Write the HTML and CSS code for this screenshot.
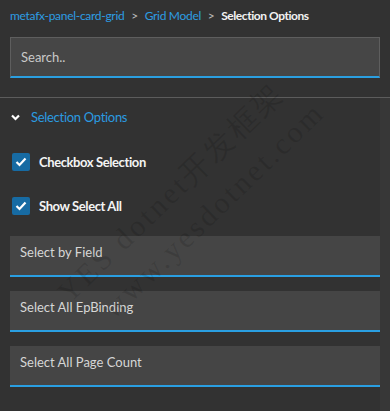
FILE: index.html
```html
<!DOCTYPE html>
<html lang="en">
<head>
    <meta charset="UTF-8" />
    <meta name="viewport" content="width=device-width, initial-scale=1" />
    <title>Selection Options</title>
    <link rel="stylesheet" href="styles.css">
</head>
<body>
    <nav class="breadcrumb">
        <a href="#">metafx-panel-card-grid</a>
        <span class="sep">&gt;</span>
        <a href="#">Grid Model</a>
        <span class="sep">&gt;</span>
        <span class="current">Selection Options</span>
    </nav>

    <div class="search">
        <input type="text" placeholder="Search.." />
    </div>

    <div class="panel">
        <div class="panel-body">
            <div class="section-header">
                <svg class="chevron" width="9" height="7" viewBox="0 0 9 7">
                    <polyline points="1,1.5 4.5,5 8,1.5" fill="none" stroke="#fff" stroke-width="2.2" />
                </svg>
                <span>Selection Options</span>
            </div>

            <label class="check-row">
                <span class="checkbox">
                    <svg width="12" height="10" viewBox="0 0 12 10">
                        <polyline points="1.5,5 4.5,8 10.5,1.5" fill="none" stroke="#fff" stroke-width="2.2" />
                    </svg>
                </span>
                Checkbox Selection
            </label>

            <label class="check-row">
                <span class="checkbox">
                    <svg width="12" height="10" viewBox="0 0 12 10">
                        <polyline points="1.5,5 4.5,8 10.5,1.5" fill="none" stroke="#fff" stroke-width="2.2" />
                    </svg>
                </span>
                Show Select All
            </label>

            <div class="fields">
                <div class="field">Select by Field</div>
                <div class="field">Select All EpBinding</div>
                <div class="field">Select All Page Count</div>
            </div>
        </div>
        <div class="scroll-track"></div>
    </div>

    <div class="watermark">YES dotnet开发框架
  www.yesdotnet.com</div>
</body>
</html>
```

FILE: styles.css
```css
body {
    margin: 0;
    background: #323232;
    font-family: Lato, "Noto Sans", sans-serif;
    font-size: 13px;
    color: #fff;
    height: 411px;
    overflow: hidden;
    position: relative;
}

.breadcrumb {
    padding: 8px 10px 13px;
    line-height: 16px;
    font-size: 12px;
    letter-spacing: -0.3px;
    white-space: nowrap;
}

.breadcrumb a {
    color: #2d9de2;
    text-decoration: none;
}

.breadcrumb .sep {
    color: #bdbdbd;
    margin: 0 4px;
}

.breadcrumb .current {
    color: #f2f2f2;
    font-weight: 700;
    letter-spacing: -0.45px;
}

.search {
    padding: 0 10px;
}

.search input {
    display: block;
    width: 100%;
    height: 41px;
    box-sizing: border-box;
    margin: 0;
    padding: 0 10px;
    background: #464646;
    border: 1px solid #5e5e5e;
    border-bottom: 2px solid #2b9fe0;
    color: #ddd;
    font-family: inherit;
    font-size: 13px;
    outline: none;
}

.search input::placeholder {
    color: #c9c9c9;
}

.panel {
    margin-top: 19px;
    border-top: 1px solid #5c5c5c;
    display: flex;
    height: 320px;
}

.panel-body {
    flex: 1;
    min-width: 0;
    padding-left: 10px;
}

.scroll-track {
    flex: 0 0 10px;
    background: #373737;
}

.section-header {
    display: flex;
    align-items: center;
    padding: 9px 0 13px;
    line-height: 20px;
    letter-spacing: -0.3px;
    color: #2b9be0;
}

.chevron {
    margin: 0 11px 0 1px;
}

.check-row {
    display: flex;
    align-items: center;
    height: 44px;
    padding-left: 2px;
    font-weight: 700;
    letter-spacing: -0.4px;
    color: #f4f4f4;
}

.checkbox {
    width: 18px;
    height: 18px;
    border-radius: 2px;
    background: #176ba3;
    display: flex;
    align-items: center;
    justify-content: center;
    margin-right: 9px;
}

.fields {
    padding-top: 8px;
    display: flex;
    flex-direction: column;
    gap: 14px;
}

.field {
    height: 41px;
    padding: 8px 10px 0;
    box-sizing: border-box;
    line-height: 16px;
    background: #454545;
    border-bottom: 2px solid #2a9fe2;
    color: #d6d6d6;
}

.watermark {
    position: absolute;
    left: 48px;
    top: 282px;
    transform-origin: 0 0;
    transform: rotate(-44deg);
    font-family: "Liberation Serif", serif;
    font-size: 30px;
    letter-spacing: 3px;
    line-height: 42px;
    white-space: pre;
    color: rgba(0, 0, 0, 0.12);
    pointer-events: none;
}
```
